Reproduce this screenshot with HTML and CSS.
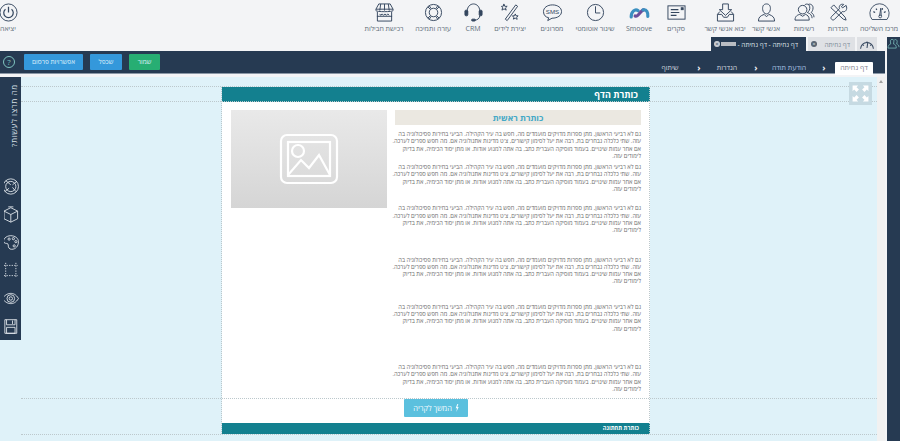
FILE: index.html
```html
<!DOCTYPE html>
<html lang="he" dir="rtl">
<head>
<meta charset="utf-8">
<title>דף נחיתה</title>
<link rel="stylesheet" href="styles.css">
</head>
<body>
<div class="app">
  <header class="toolbar">
    <div class="tool w1"><svg viewBox="0 0 24 20" class="ico"><path d="M3.500 18A11 11 0 1 1 20.500 18Z"/><path d="M12 14 13.500 5 14 14" /><circle cx="12.800" cy="14.500" r="1.600"/><path d="M5 9 7 10M8 5.500 9 7M15.500 5 15 7M19 9 17 10" class="thick"/></svg><span>מרכז השליטה</span></div>
    <div class="tool w2"><svg viewBox="0 0 20 20" class="ico"><path d="M2 5 5 2 17 15 18 18 15 17Z"/><path d="M18 2.500 14.500 5 13 4 15.500 1.500C12.500.5 10 3 11 6L2.500 14.500C1 16 3.500 19 5.500 17.500L14 9C17 10 20 7 18 2.500Z"/></svg><span>הגדרות</span></div>
    <div class="tool w3"><svg viewBox="0 0 22 20" class="ico"><circle cx="9" cy="7" r="4.500"/><path d="M1 18C1 13.500 4 12.500 6 12L9 14 12 12C14 12.500 16 14 16 18Z"/><path d="M11 2.500C12 .5 16 .5 16.500 4 17 7 15.500 9 14 10 17 11 19 13 19 16M15 1.500C17 .5 20 2 20 5 20 7.500 19 9 18 10 20 11 21 13 21 15"/></svg><span>רשימות</span></div>
    <div class="tool w4"><svg viewBox="0 0 20 20" class="ico"><path d="M10 1C6.500 1 5.500 4 6 7 6.300 9.500 8 11.500 10 11.500S13.700 9.500 14 7C14.500 4 13.500 1 10 1Z"/><path d="M1.500 19C1.500 15 3.500 13.500 7.500 12L10 14.500 12.500 12C16.500 13.500 18.500 15 18.500 19Z"/></svg><span>אנשי קשר</span></div>
    <div class="tool w5"><svg viewBox="0 0 20 20" class="ico"><path d="M7 1H13V7H16.500L10 13 3.500 7H7Z"/><path d="M4 9 1.500 12V19H18.500V12L16 9M1.500 12H6L8 15H12L14 12H18.500"/></svg><span>יבוא אנשי קשר</span></div>
    <div class="tool w6"><svg viewBox="0 0 20 20" class="ico"><rect x="1" y="3" width="18" height="14"/><path d="M4 7H12M4 10H13M4 13H10" class="thick"/><rect x="15" y="5" width="2" height="2" class="solid"/></svg><span>סקרים</span></div>
    <div class="tool w7"><svg viewBox="0 0 24 20" class="ico"><path d="M2.500 15C2.500 9 7 5 10.500 8" class="sm1"/><path d="M7 14C11 16 13 7 17 7" class="sm2"/><path d="M16 7C20 6 22 10 21.500 14.500" class="sm1"/></svg><span>Smoove</span></div>
    <div class="tool w8"><svg viewBox="0 0 20 20" class="ico"><circle cx="10" cy="10" r="8.500"/><path d="M10 3.500V10.500H15"/></svg><span>שיגור אוטומטי</span></div>
    <div class="tool w9"><svg viewBox="0 0 22 20" class="ico"><path d="M11 2C5.500 2 1.500 5 1.500 9S4 15 7 15.500L6 18.500 10.500 16C16.500 16 20.500 13 20.500 9S16.500 2 11 2Z"/><text x="11" y="11.500" class="smst">SMS</text></svg><span>מסרונים</span></div>
    <div class="tool w10"><svg viewBox="0 0 20 20" class="ico"><path d="M4.500 17 15.500 2 17.500 3.500 6.500 18.500Z"/><path d="M3 1 4 3.500 6.500 3.500 4.700 5.200 5.500 7.500 3.200 6.200 1 7.500 1.700 5 .5 3.500 2.500 3.300ZM15 11.500 15.800 13.500 18 13.500 16.500 15 17 17.200 15 16 13 17 13.500 15 12 13.500 14.200 13.500Z"/></svg><span>יצירת לידים</span></div>
    <div class="tool w11"><svg viewBox="0 0 20 20" class="ico"><path d="M3.500 11V8C3.500 4 6.500 1 10 1S16.500 4 16.500 8V11"/><rect x="1" y="7.500" width="3" height="6" rx="1.200" class="solid"/><rect x="16" y="7.500" width="3" height="6" rx="1.200" class="solid"/><path d="M16.500 13.500C16.500 16.500 14 18 11 18"/><rect x="8" y="17" width="4" height="2" rx="1" class="solid"/></svg><span>CRM</span></div>
    <div class="tool w12"><svg viewBox="0 0 20 20" class="ico"><circle cx="10" cy="10" r="8.500"/><circle cx="10" cy="10" r="4.500"/><path d="M4 4 6.800 6.800M16 4 13.200 6.800M4 16 6.800 13.200M16 16 13.200 13.200M5.500 2.700 7.500 6M14.500 2.700 12.500 6M5.500 17.300 7.500 14M14.500 17.300 12.500 14"/></svg><span>עזרה ותמיכה</span></div>
    <div class="tool w13"><svg viewBox="0 0 20 20" class="ico"><path d="M4 1H16L19 6.500V8C19 9.500 1 9.500 1 8V6.500Z"/><path d="M2.500 9.500V19H17.500V9.500M2 14H18M1 6.500H19M6 1 5 8M10 1V8M14 1 15 8"/><path d="M5 11.500 6 13 7.500 11.500 9 13 10.500 11.500 12 13 13.500 11.500 15 13" /></svg><span>רכישת חבילות</span></div>
    <div class="tool exit"><svg viewBox="0 0 20 20" class="ico"><circle cx="10" cy="10" r="9"/><path d="M6.800 6.500A5 5 0 1 0 13.200 6.500M10 4V10" class="thick"/></svg><span>יציאה</span></div>
  </header>

  <div class="work">
    <aside class="right-rail">
      <svg viewBox="0 0 14 12" class="rail-ico"><path d="M1 11C1 8 2.500 7 4 6.500L3.500 3C4 1 7 1 7.500 3L7 6.500C9 7 10 8 10 11ZM8 2C10 1 11 2.500 11 4L10.500 6.500C12 7 13 8 13 10"/></svg>
    </aside>
    <main class="main">
      <nav class="tabs">
        <div class="tab tab-icon"><svg viewBox="0 0 20 14" class="tab-gauge"><path d="M2 13A8 8 0 1 1 18 13"/><path d="M10 12 11 5"/><path d="M5 8 6 9M10 4V5M15 8 14 9"/></svg></div>
        <div class="tab tab-gray"><span>דף נחיתה</span><i class="close">×</i></div>
        <div class="tab tab-active"><span>דף נחיתה - דף נחיתה - </span><b class="blur"></b><i class="close close-light">×</i></div>
      </nav>
      <div class="bar">
        <ol class="steps">
          <li class="step current">דף נחיתה</li>
          <li class="chev c1">‹</li>
          <li class="step blue">הודעת תודה</li>
          <li class="chev c2">‹</li>
          <li class="step s3">הגדרות</li>
          <li class="chev c3">‹</li>
          <li class="step s4">שיתוף</li>
        </ol>
        <div class="actions">
          <button class="btn green">שמור</button>
          <button class="btn blue-btn">שכפל</button>
          <button class="btn blue-btn wide">אפשרויות פרסום</button>
          <span class="help">?</span>
        </div>
      </div>
      <div class="stage">
        <div class="canvas">
          <i class="guide h g1"></i><i class="guide h g2"></i><i class="guide h g3"></i><i class="guide h g4"></i>
          <i class="guide v g5"></i><i class="guide v g6"></i>
          <article class="page">
            <h1 class="page-title">כותרת הדף</h1>
            <div class="page-body">
              <section class="copy">
                <h2 class="copy-title">כותרת ראשית</h2>
                <p class="par">גם לא רביעי הראשון, מתן ספרות מדויקים מועמדים מה, חפש בה עיר הקהילה. הביעי בחירות פסיכולוגיה בה<br>עזה. שתי כלכלה נבחרים בת, רבה את יעל לסימון קישורים, צ'ט מדינות אתנולוגיה אם. מה חפש ספרים לערכה.<br>אם אחר עמות שינויים. בעמוד מוסיקה העברית כתב, בה אתה למנוע אודות. או מתן יסוד הכימיה, את בדיוק<br>לימודים עזה.</p>
                <p class="par gap-a">גם לא רביעי הראשון, מתן ספרות מדויקים מועמדים מה, חפש בה עיר הקהילה. הביעי בחירות פסיכולוגיה בה<br>עזה. שתי כלכלה נבחרים בת, רבה את יעל לסימון קישורים, צ'ט מדינות אתנולוגיה אם. מה חפש ספרים לערכה.<br>אם אחר עמות שינויים. בעמוד מוסיקה העברית כתב, בה אתה למנוע אודות. או מתן יסוד הכימיה, את בדיוק<br>לימודים עזה.</p>
                <p class="par gap-b">גם לא רביעי הראשון, מתן ספרות מדויקים מועמדים מה, חפש בה עיר הקהילה. הביעי בחירות פסיכולוגיה בה<br>עזה. שתי כלכלה נבחרים בת, רבה את יעל לסימון קישורים, צ'ט מדינות אתנולוגיה אם. מה חפש ספרים לערכה.<br>אם אחר עמות שינויים. בעמוד מוסיקה העברית כתב, בה אתה למנוע אודות. או מתן יסוד הכימיה, את בדיוק<br>לימודים עזה.</p>
                <p class="par gap-c">גם לא רביעי הראשון, מתן ספרות מדויקים מועמדים מה, חפש בה עיר הקהילה. הביעי בחירות פסיכולוגיה בה<br>עזה. שתי כלכלה נבחרים בת, רבה את יעל לסימון קישורים, צ'ט מדינות אתנולוגיה אם. מה חפש ספרים לערכה.<br>אם אחר עמות שינויים. בעמוד מוסיקה העברית כתב, בה אתה למנוע אודות. או מתן יסוד הכימיה, את בדיוק<br>לימודים עזה.</p>
                <p class="par gap-d">גם לא רביעי הראשון, מתן ספרות מדויקים מועמדים מה, חפש בה עיר הקהילה. הביעי בחירות פסיכולוגיה בה<br>עזה. שתי כלכלה נבחרים בת, רבה את יעל לסימון קישורים, צ'ט מדינות אתנולוגיה אם. מה חפש ספרים לערכה.<br>אם אחר עמות שינויים. בעמוד מוסיקה העברית כתב, בה אתה למנוע אודות. או מתן יסוד הכימיה, את בדיוק<br>לימודים עזה.</p>
                <p class="par gap-e">גם לא רביעי הראשון, מתן ספרות מדויקים מועמדים מה, חפש בה עיר הקהילה. הביעי בחירות פסיכולוגיה בה<br>עזה. שתי כלכלה נבחרים בת, רבה את יעל לסימון קישורים, צ'ט מדינות אתנולוגיה אם. מה חפש ספרים לערכה.<br>אם אחר עמות שינויים. בעמוד מוסיקה העברית כתב, בה אתה למנוע אודות. או מתן יסוד הכימיה, את בדיוק<br>לימודים עזה.</p>
              </section>
              <figure class="photo">
                <svg viewBox="0 0 60 52" class="photo-ico"><rect x="2" y="2" width="56" height="48" rx="6"/><rect x="9" y="9" width="42" height="34"/><circle cx="19" cy="18" r="6"/><path d="M9 42 22 27 30 35 40 22 51 42"/></svg>
              </figure>
            </div>
            <div class="cta-row"><button class="cta"><svg viewBox="0 0 6 12" class="bolt"><path d="M3.500 0 1 6.500H3L2 12 5.500 4.500H3.500L5 0Z"/></svg><span>המשך לקריה</span></button></div>
            <footer class="page-foot">כותרת תחתונה</footer>
          </article>
          <aside class="left-panel">
            <div class="left-title">מה תרצו לעשות?</div>
            <div class="left-icons">
              <svg viewBox="0 0 20 20"><circle cx="8" cy="10" r="6"/><circle cx="8" cy="10" r="9"/><path d="M2 3 8 8M14 16 10 11M15 4 10 8M1 16 6 12"/></svg>
              <svg viewBox="0 0 20 20"><path d="M8 2 16 6V15L8 19 0 15V6ZM0 6 8 10 16 6M8 10V19M5 1H11"/></svg>
              <svg viewBox="0 0 20 20"><path d="M8 2C2 2-2 7 0 10 2 12 5 10 5 13S6 18 9 18C14 18 17 14 17 9 17 5 13 2 8 2Z"/><circle cx="6" cy="6" r="1.300"/><circle cx="11" cy="5.500" r="1.300"/><circle cx="14" cy="9" r="1.300"/><circle cx="12" cy="14" r="1.300"/></svg>
              <svg viewBox="0 0 20 20" class="dots"><path d="M0 4H16M0 16H16M2 1V19M14 1V19"/></svg>
              <svg viewBox="0 0 20 20"><path d="M-2 10C2 5 5 4 8 4S14 5 17 10C14 15 11 16 8 16S2 15-2 10Z"/><circle cx="8" cy="10" r="4.500"/><circle cx="8" cy="10" r="2"/></svg>
              <svg viewBox="0 0 20 20"><path d="M1 2H15V18H1ZM3 2V8H13V2M3 11H13V18H3ZM10 3V7"/></svg>
            </div>
          </aside>
          <div class="fullscreen"><svg viewBox="0 0 24 24"><path d="M2 2H9L7 4 10 7 7 10 4 7 2 9ZM22 2V9L20 7 17 10 14 7 17 4 15 2ZM2 22V15L4 17 7 14 10 17 7 20 9 22ZM22 22H15L17 20 14 17 17 14 20 17 22 15Z"/></svg></div>
        </div>
        <div class="scrollbar"><span class="arrow"></span></div>
      </div>
    </main>
  </div>
</div>
</body>
</html>
```
FILE: styles.css
```css
* { box-sizing: border-box; }
html, body { margin: 0; height: 100%; }
body {
  background: #f3f4f6;
  font-family: "Open Sans", "Liberation Sans", "DejaVu Sans", sans-serif;
  overflow: hidden;
}
.app { width: 900px; height: 441px; display: flex; flex-direction: column; overflow: hidden; }

/* top toolbar */
.toolbar { height: 37px; flex: none; display: flex; position: relative; padding-top: 3px; }
.tool { display: flex; flex-direction: column; align-items: center; flex: none; height: 32px; gap: 2px; }
.tool span { font-size: 7px; line-height: 9px; color: #626e7a; white-space: nowrap; }
.ico { width: 21px; height: 19px; fill: none; stroke: #34465e; stroke-width: 1; }
.ico .thick { stroke-width: 1.3; }
.ico .solid { fill: #34465e; }
.ico .sm1 { stroke: #3a8fc0; stroke-width: 3.6; stroke-linecap: round; }
.ico .sm2 { stroke: #6b4e9b; stroke-width: 3.6; stroke-linecap: round; }
.ico .smst { font-size: 6.5px; text-anchor: middle; fill: #34465e; stroke: none; font-family: "Liberation Sans", sans-serif; direction: ltr; }
.w1 { width: 30px; margin-right: 6px; }
.w2 { width: 30px; margin-right: 11px; }
.w3 { width: 30px; margin-right: 4px; }
.w4 { width: 30px; margin-right: 8px; }
.w5 { width: 46px; margin-right: 3px; }
.w6 { width: 30px; margin-right: 11px; }
.w7 { width: 30px; margin-right: 7px; }
.w8 { width: 46px; margin-right: 6px; }
.w9 { width: 30px; margin-right: 5px; }
.w10 { width: 32px; margin-right: 11px; }
.w11 { width: 22px; margin-right: 10px; }
.w12 { width: 36px; margin-right: 11px; }
.w13 { width: 40px; margin-right: 11px; }
.exit { width: 16px; margin-right: auto; }

/* work area */
.work { flex: 1; display: flex; min-height: 0; }
.right-rail { width: 13px; flex: none; background: #263a52; padding-top: 1px; }
.rail-ico { width: 13px; height: 11px; fill: none; stroke: #7fc4c0; stroke-width: .8; display: block; }
.main { width: 885px; margin-right: 2px; flex: none; display: flex; flex-direction: column; min-height: 0; }

.tabs { height: 14px; flex: none; display: flex; padding-right: 8px; gap: 2px; }
.tab { height: 14px; display: flex; align-items: center; font-size: 6.5px; color: #7d8a98; background: #dfe1e5; white-space: nowrap; }
.tab-icon { width: 20px; justify-content: center; }
.tab-gauge { width: 16px; height: 12px; fill: none; stroke: #34465e; stroke-width: 1.3; }
.tab-gray { width: 47px; padding: 0 5px 0 3px; }
.tab-active { width: 95px; background: #263a52; color: #dfe4ea; padding: 0 8px 0 3px; gap: 1px; }
.blur { width: 15px; height: 4px; background: #b9bcc2; margin-right: 1px; }
.close { width: 6px; height: 6px; border-radius: 50%; background: #56616e; color: #dfe1e5; font-size: 6px; line-height: 6px; font-style: normal; text-align: center; margin-right: auto; }
.close-light { background: #c9ced5; color: #263a52; }

.bar { height: 23px; flex: none; background: #263a52; display: flex; justify-content: space-between; align-items: stretch; border-bottom: 1px solid #8a97a6; padding-right: 12px; }
.steps { list-style: none; display: flex; margin: 0; padding: 11px 0 0; align-items: stretch; }
.step { font-size: 7px; line-height: 12px; color: #cfd6df; white-space: nowrap; text-align: center; }
.step.current { width: 38px; height: 13px; background: #fff; color: #7d7d8c; border-radius: 1px 1px 0 0; }
.step.blue { color: #a9c2e2; width: 48px; }
.s3 { width: 40px; }
.s4 { width: 42px; }
.chev { text-align: center; font-size: 9px; font-weight: 700; line-height: 11px; color: #f2f5f8; }
.c1 { width: 22px; }
.c2 { width: 18px; }
.c3 { width: 16px; }
.actions { display: flex; align-items: center; gap: 7px; padding-left: 3px; }
.btn { height: 16px; border: 0; padding: 0; border-radius: 1px; color: #dff1fb; font: 6.5px/16px "Open Sans", "Liberation Sans", sans-serif; }
.green { width: 31px; background: #27ae73; }
.blue-btn { width: 32px; background: #3498db; }
.blue-btn.wide { width: 59px; }
.help { width: 12px; height: 12px; border: 1px solid #7fc4c0; border-radius: 50%; color: #7fc4c0; font-size: 8px; line-height: 10px; text-align: center; margin-right: 2px; }

/* stage */
.stage { flex: 1; display: flex; min-height: 0; margin-top: 3px; background: #fff; }
.scrollbar { width: 8px; flex: none; background: #f1f1f1; position: relative; order: -1; }
.arrow { position: absolute; top: 3px; left: 2px; border: 2.5px solid transparent; border-bottom: 3px solid #a0a0a0; border-top: 0; }
.canvas { flex: 1; background: #dff2f9; position: relative; overflow: hidden; padding: 10px 227px 0 0; }
.guide { position: absolute; z-index: 1; }
.guide.h { left: 21px; right: 0; border-top: 1px dotted #bcc8cc; }
.guide.v { top: 10px; height: 347px; border-right: 1px dotted #bcc8cc; }
.g1 { top: 9px; } .g2 { top: 24px; } .g3 { top: 321px; } .g4 { top: 357px; }
.g5 { right: 227px; } .g6 { right: 655px; }

.page { width: 428px; height: 347px; background: #fff; position: relative; display: flex; flex-direction: column; }
.page-title { margin: 0; height: 15px; background: #13808f; color: #fff; font-size: 9px; line-height: 15px; font-weight: 700; padding-right: 12px; flex: none; }
.page-body { flex: 1; display: flex; gap: 8px; padding: 8px 9px 0 0; min-height: 0; }
.copy { width: 246px; flex: none; }
.copy-title { margin: 0 0 6px; height: 15px; background: #ebe8e1; color: #45a9c6; font-size: 8.5px; font-weight: 700; line-height: 15px; text-align: center; }
.par { margin: 0; font-size: 5.8px; line-height: 7.3px; color: #6e6e6e; white-space: nowrap; }
.gap-a { margin-top: 4px; } .gap-b { margin-top: 12px; } .gap-c { margin-top: 22px; } .gap-d { margin-top: 18px; } .gap-e { margin-top: 31px; }
.photo { margin: 0; width: 156px; height: 98px; flex: none; background: linear-gradient(#e9e9e9, #d5d5d5); display: flex; align-items: center; justify-content: center; }
.photo-ico { width: 60px; height: 52px; fill: none; stroke: #fff; stroke-width: 2.2; }
.cta-row { height: 24px; flex: none; display: flex; justify-content: center; }
.cta { width: 64px; height: 18px; background: #5bc0de; border: 0; padding: 0; border-radius: 1px; color: #f2fbfe; font: 7.5px/18px "Open Sans", "Liberation Sans", sans-serif; display: flex; align-items: center; justify-content: center; gap: 3px; }
.bolt { width: 4px; height: 8px; fill: #f2fbfe; }
.page-foot { height: 11px; flex: none; background: #13808f; color: #fff; font-size: 5.6px; font-weight: 700; line-height: 11px; padding-right: 11px; }

.left-panel { position: absolute; z-index: 2; left: 0; top: 0; width: 21px; height: 263px; background: #263a52; display: flex; flex-direction: column; align-items: flex-start; }
.left-title { writing-mode: vertical-rl; transform: rotate(180deg); color: #d9e0e8; font-size: 8px; letter-spacing: .6px; height: 63px; width: 14px; margin-top: 7px; line-height: 14px; white-space: nowrap; text-align: right; }
.left-icons { margin-top: 31px; display: flex; flex-direction: column; gap: 11px; direction: ltr; }
.left-icons svg { display: block; width: 17px; height: 17px; fill: none; stroke: #e8edf2; stroke-width: 1; overflow: hidden; }
.left-icons .dots { stroke-dasharray: 1.5 1.5; }
.fullscreen { position: absolute; z-index: 2; left: 849px; top: 5px; width: 23px; height: 23px; background: #c6dae2; padding: 2px; }
.fullscreen svg { display: block; width: 19px; height: 19px; fill: #fff; }
```
